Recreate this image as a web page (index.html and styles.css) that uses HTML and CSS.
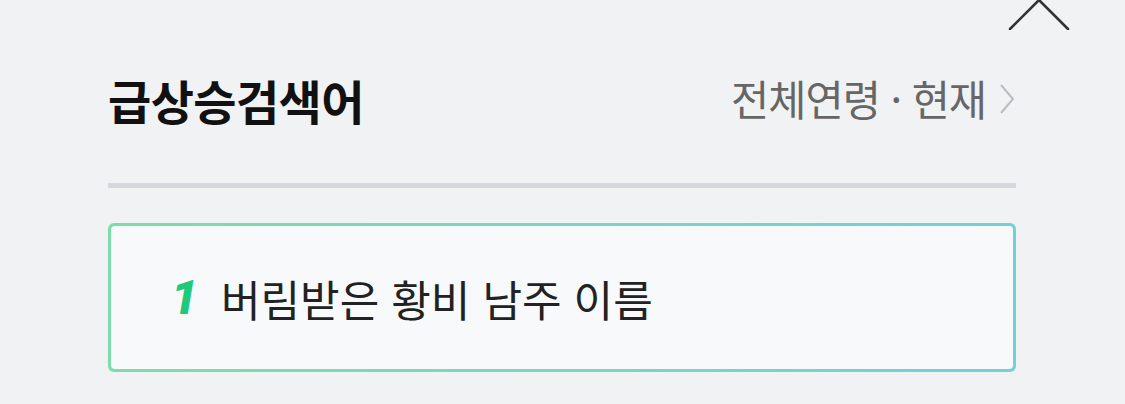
FILE: index.html
```html
<!DOCTYPE html>
<html lang="ko">
<head>
<meta charset="utf-8">
<link rel="stylesheet" href="styles.css">
</head>
<body>
<div class="panel">
  <div class="topbar">
    <svg class="close" width="62" height="30" viewBox="0 0 62 30" aria-label="닫기">
      <path d="M2 29 L31 0 M31 0 L60 29 M31 0 L2 -29 M31 0 L60 -29" stroke="#333" stroke-width="2.6" fill="none" stroke-linecap="round"/>
    </svg>
  </div>
  <div class="header">
    <h2 class="title">급상승검색어</h2>
    <div class="filter">전체연령 · 현재<svg class="chev" width="18" height="34" viewBox="0 0 18 34"><path d="M3 3 L15 17 L3 31" stroke="#b9bcc0" stroke-width="2" fill="none"/></svg></div>
  </div>
  <div class="divider"></div>
  <div class="card">
    <div class="card-inner">
      <span class="rank">1</span>
      <span class="keyword">버림받은 황비 남주 이름</span>
    </div>
  </div>
</div>
</body>
</html>
```

FILE: styles.css
```css
html, body {
  margin: 0;
  padding: 0;
  background: #f1f2f4;
}
body {
  font-family: "Noto Sans CJK KR", "Noto Sans", sans-serif;
  width: 1125px;
  height: 404px;
  overflow: hidden;
}
.panel {
  width: 908px;
  margin-left: 108px;
}
.topbar {
  height: 30px;
  display: flex;
  justify-content: flex-end;
  margin-right: -54px;
}
.close {
  display: block;
}
.header {
  display: flex;
  justify-content: space-between;
  align-items: center;
  height: 138px;
}
.title {
  margin: 0;
  font-size: 47px;
  font-weight: 700;
  color: #111;
  letter-spacing: -0.6px;
  line-height: 1;
}
.filter {
  display: flex;
  align-items: center;
  font-size: 41.5px;
  color: #666;
  letter-spacing: -1px;
  line-height: 1;
}
.chev {
  margin-left: 12px;
  display: block;
}
.divider {
  height: 5px;
  background: #d3d9de;
  margin-top: 15px;
}
.card {
  margin-top: 35px;
  height: 149px;
  border-radius: 6px;
  padding: 3px;
  box-sizing: border-box;
  background: linear-gradient(90deg, #7ddcaa, #74d0d8);
}
.card-inner {
  height: 100%;
  border-radius: 4px;
  background: #f8f9fb;
  display: flex;
  align-items: center;
  padding-left: 60px;
}
.rank {
  font-family: "Roboto", "Liberation Sans", sans-serif;
  font-style: italic;
  font-weight: 900;
  font-size: 48px;
  color: #1fc97b;
  width: 50px;
}
.keyword {
  font-size: 43px;
  color: #222;
  letter-spacing: 0;
}
```
